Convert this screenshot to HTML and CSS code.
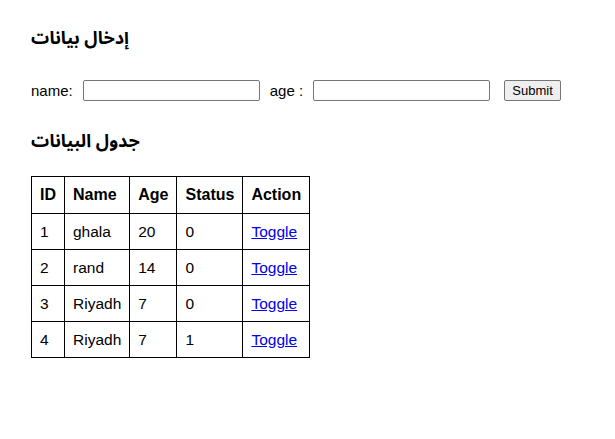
FILE: index.html
```html
<!DOCTYPE html>
<html lang="ar">
<head>
<meta charset="utf-8">
<link rel="stylesheet" href="styles.css">
</head>
<body>
<div class="page">
  <h2 class="title">إدخال بيانات</h2>
  <form class="form">
    <label class="lbl">name:</label>
    <input class="field" type="text">
    <label class="lbl">age :</label>
    <input class="field" type="text">
    <button class="btn" type="button">Submit</button>
  </form>
  <h2 class="title title-table">جدول البيانات</h2>
  <table class="tbl">
    <thead>
      <tr><th>ID</th><th>Name</th><th>Age</th><th>Status</th><th>Action</th></tr>
    </thead>
    <tbody>
      <tr><td>1</td><td>ghala</td><td>20</td><td>0</td><td><a href="#">Toggle</a></td></tr>
      <tr><td>2</td><td>rand</td><td>14</td><td>0</td><td><a href="#">Toggle</a></td></tr>
      <tr><td>3</td><td>Riyadh</td><td>7</td><td>0</td><td><a href="#">Toggle</a></td></tr>
      <tr><td>4</td><td>Riyadh</td><td>7</td><td>1</td><td><a href="#">Toggle</a></td></tr>
    </tbody>
  </table>
</div>
</body>
</html>
```
FILE: styles.css
```css
html, body {
  margin: 0;
  padding: 0;
  background: #fff;
}
.page {
  padding: 24px 31px;
  font-family: "Liberation Sans", Arial, "DejaVu Sans", sans-serif;
  font-size: 16px;
  color: #000;
}
.title {
  font-family: "Noto Sans Arabic", "Liberation Sans", "DejaVu Sans", sans-serif;
  font-size: 18px;
  font-weight: bold;
  margin: 0 0 28px 0;
  line-height: 28px;
}
.title-table {
  margin-bottom: 21px;
}
.form {
  display: flex;
  align-items: center;
  gap: 10px;
  margin: 0 0 26px 0;
}
.lbl {
  font-size: 15px;
}
.field {
  box-sizing: border-box;
  width: 177px;
  height: 21px;
  border: 1px solid #767676;
  border-radius: 2px;
  padding: 1px 2px;
  margin: 0;
  font-size: 13px;
}
.btn {
  box-sizing: border-box;
  margin-left: 4px;
  width: 57px;
  height: 21px;
  font-family: "Liberation Sans", Arial, sans-serif;
  font-size: 13px;
  padding: 0 6px;
  border: 1px solid #767676;
  border-radius: 2px;
  background: #efefef;
  color: #000;
}
.tbl {
  border-collapse: collapse;
}
.tbl th, .tbl td {
  border: 1px solid #000;
  padding: 8px;
  text-align: left;
  line-height: 19px;
}
.tbl th {
  font-size: 16px;
  line-height: 20px;
}
.tbl td {
  font-size: 15.5px;
}
.tbl a {
  color: #0000ee;
  text-decoration: underline;
}
```
